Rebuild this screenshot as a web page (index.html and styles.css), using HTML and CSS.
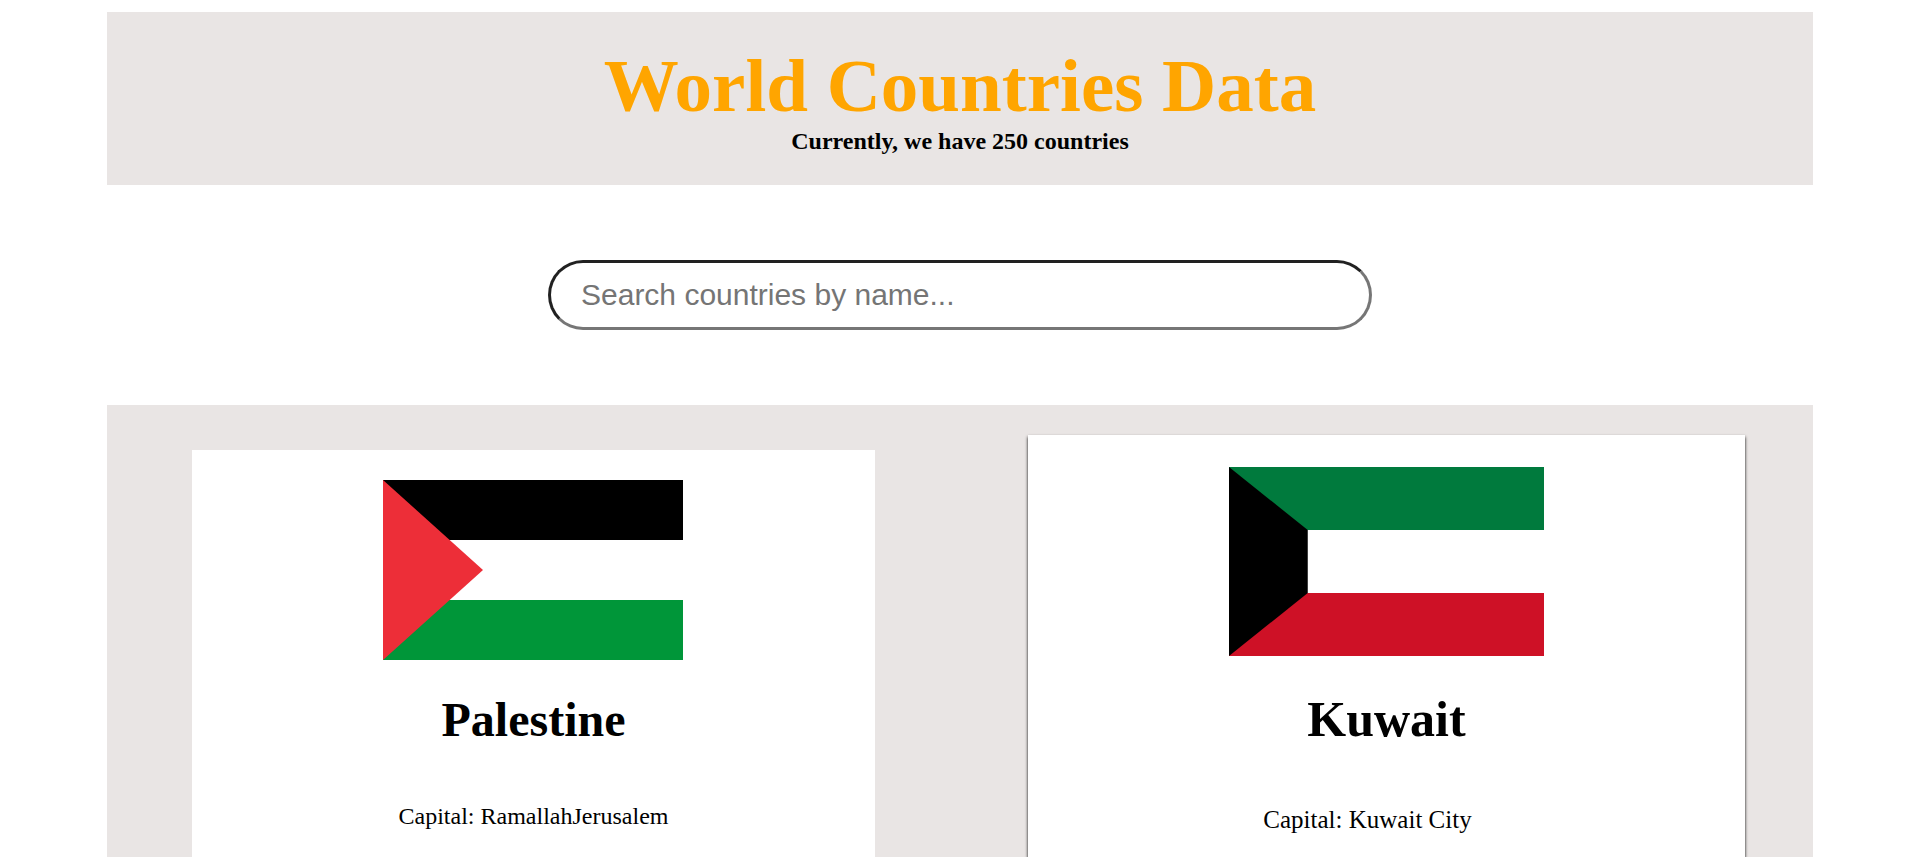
FILE: index.html
```html
<!DOCTYPE html>
<html lang="en">
<head>
<meta charset="utf-8">
<meta name="viewport" content="width=device-width, initial-scale=1">
<title>World Countries Data</title>
<link rel="stylesheet" href="styles.css">
</head>
<body>
<header class="banner">
  <h1 class="banner-title">World Countries Data</h1>
  <p class="banner-count">Currently, we have 250 countries</p>
</header>
<form class="search" role="search">
  <input class="search-input" type="text" aria-label="Search countries by name" placeholder="Search countries by name...">
</form>
<main class="countries">
  <article class="card">
    <svg class="flag" viewBox="0 0 300 180" role="img" aria-label="Flag of Palestine">
      <rect width="300" height="180" fill="#fff"/>
      <rect width="300" height="60" fill="#000"/>
      <rect y="120" width="300" height="60" fill="#009639"/>
      <path d="M0 0L100 90L0 180Z" fill="#ed2e38"/>
    </svg>
    <h2 class="name">Palestine</h2>
    <p class="capital">Capital: RamallahJerusalem</p>
  </article>
  <article class="card card-active">
    <svg class="flag" viewBox="0 0 300 180" role="img" aria-label="Flag of Kuwait">
      <rect width="300" height="180" fill="#fff"/>
      <rect width="300" height="60" fill="#007a3d"/>
      <rect y="120" width="300" height="60" fill="#ce1126"/>
      <path d="M0 0L75 60V120L0 180Z" fill="#000"/>
    </svg>
    <h2 class="name">Kuwait</h2>
    <p class="capital">Capital: Kuwait City</p>
  </article>
</main>
</body>
</html>
```
FILE: styles.css
```css
* {
  box-sizing: border-box;
  margin: 0;
  padding: 0;
}

body {
  display: flex;
  flex-direction: column;
  min-height: 100vh;
  padding: 12px 107px 0;
  background: #fff;
  color: #000;
  font-family: "Liberation Serif", "Times New Roman", serif;
  text-align: center;
}

.banner {
  padding: 32px 30px 30px;
  background: #e9e5e4;
}

.banner-title {
  color: #ffa500;
  font-size: 75px;
  line-height: 84px;
}

.banner-count {
  font-size: 24px;
  font-weight: bold;
  line-height: 27px;
}

.search {
  display: flex;
  justify-content: center;
  padding: 75px 0;
}

.search-input {
  width: min(100%, 824px);
  height: 70px;
  padding: 0 30px;
  border: 3px solid;
  border-color: #212121 #767676 #767676 #212121;
  border-radius: 35px;
  background: #fff;
  font-family: "Liberation Sans", Arial, sans-serif;
  font-size: 30px;
}

.search-input::placeholder {
  color: #757575;
}

.countries {
  display: grid;
  flex: 1;
  grid-template-columns: 1fr 1fr;
  justify-items: center;
  background: #e9e5e4;
}

.card {
  width: 80%;
  margin-top: 45px;
  padding: 30px 30px 0;
  background: #fff;
}

.flag {
  display: block;
  width: 300px;
  height: 180px;
  margin: 0 auto;
}

.name {
  margin-top: 32px;
  font-size: 48px;
  line-height: 55px;
}

.capital {
  margin-top: 56px;
  font-size: 24px;
  line-height: 27px;
}

.card-active {
  width: 84%;
  margin-top: 30px;
  padding-top: 32px;
  box-shadow: 0 2px 3px #000;
}

.card-active .flag {
  width: 315px;
  height: 189px;
}

.card-active .name {
  margin-top: 34px;
  font-size: 50px;
  line-height: 58px;
}

.card-active .capital {
  margin-top: 58px;
  padding-right: 38px;
  font-size: 25px;
  line-height: 28px;
}
```
